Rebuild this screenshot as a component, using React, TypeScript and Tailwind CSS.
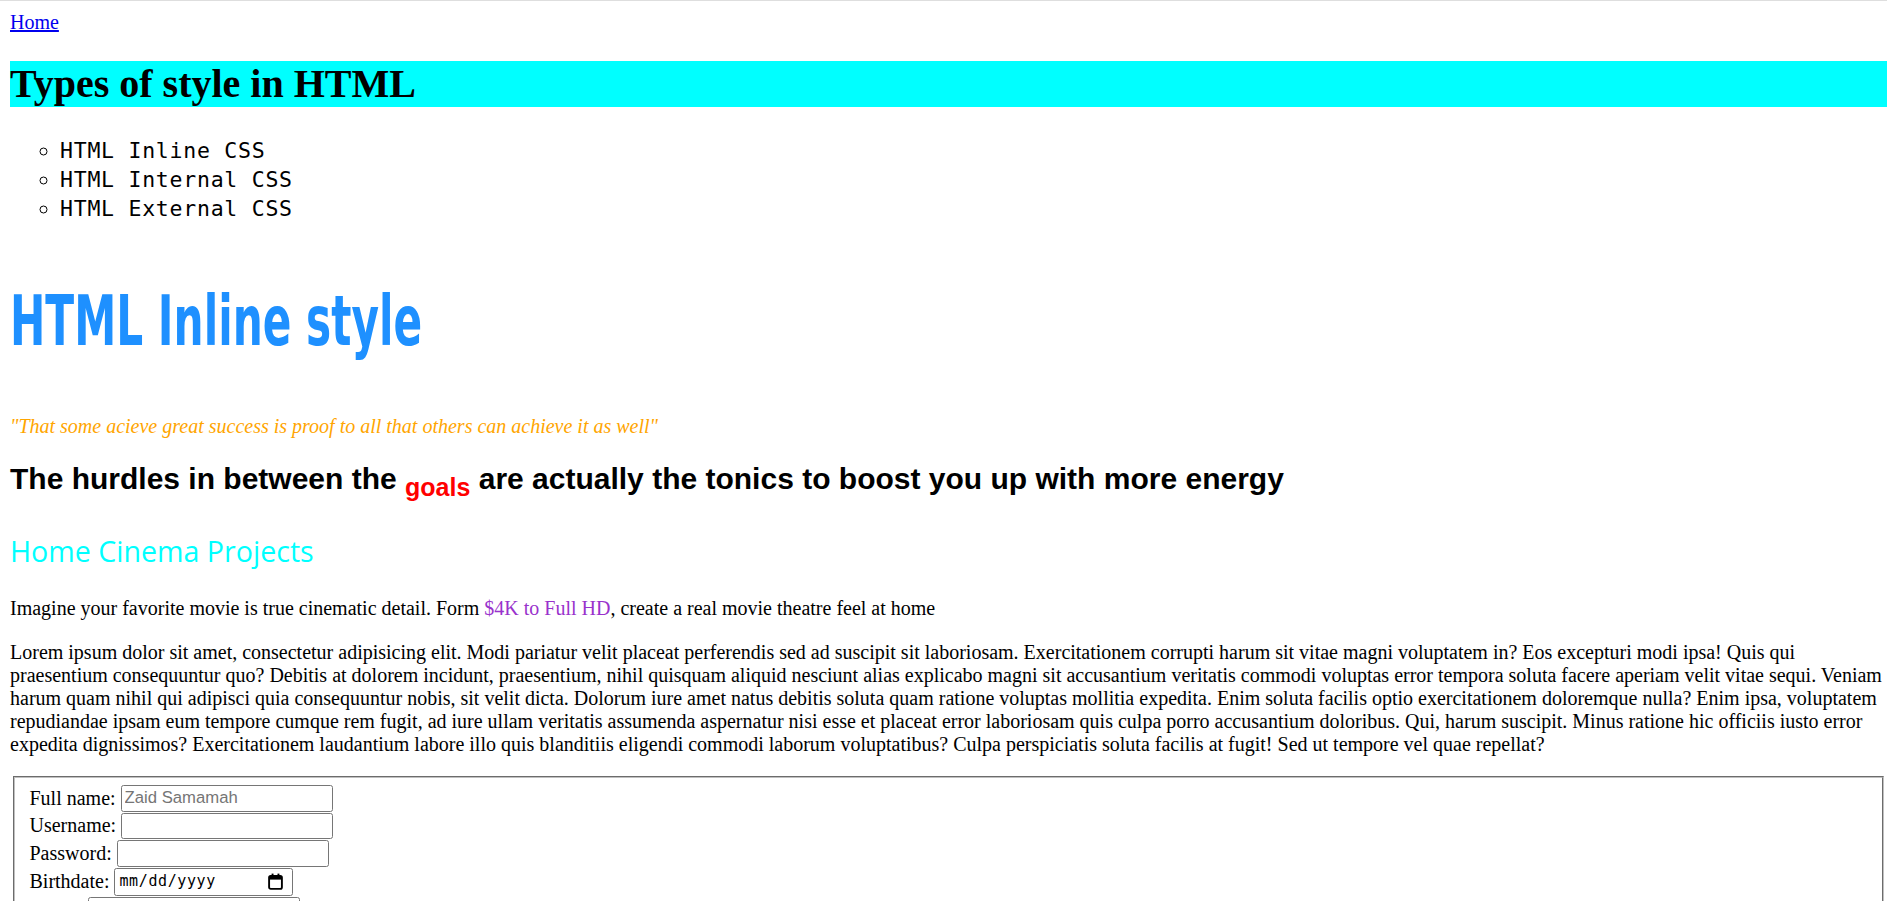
import type { ReactNode } from 'react'

const LOREM =
  'Lorem ipsum dolor sit amet, consectetur adipisicing elit. Modi pariatur velit placeat perferendis sed ad suscipit sit laboriosam. Exercitationem corrupti harum sit vitae magni voluptatem in? Eos excepturi modi ipsa! Quis qui praesentium consequuntur quo? Debitis at dolorem incidunt, praesentium, nihil quisquam aliquid nesciunt alias explicabo magni sit accusantium veritatis commodi voluptas error tempora soluta facere aperiam velit vitae sequi. Veniam harum quam nihil qui adipisci quia consequuntur nobis, sit velit dicta. Dolorum iure amet natus debitis soluta quam ratione voluptas mollitia expedita. Enim soluta facilis optio exercitationem doloremque nulla? Enim ipsa, voluptatem repudiandae ipsam eum tempore cumque rem fugit, ad iure ullam veritatis assumenda aspernatur nisi esse et placeat error laboriosam quis culpa porro accusantium doloribus. Qui, harum suscipit. Minus ratione hic officiis iusto error expedita dignissimos? Exercitationem laudantium labore illo quis blanditiis eligendi commodi laborum voluptatibus? Culpa perspiciatis soluta facilis at fugit! Sed ut tempore vel quae repellat?'

const STYLES = ['HTML Inline CSS', 'HTML Internal CSS', 'HTML External CSS']

function Row({ label, children, tall }: { label: string; children: ReactNode; tall?: boolean }) {
  return (
    <div className={`flex items-center gap-[5px] ${tall ? 'h-[29.5px]' : 'h-[27.5px]'}`}>
      <label>{label}</label>
      {children}
    </div>
  )
}

const inputCls =
  'w-[212px] h-[26.7px] border border-[#767676] rounded-[2.5px] px-[3px] bg-white font-["Liberation_Sans",Arial,sans-serif] text-[16.7px] text-black placeholder:text-[#757575] outline-none'

function CalendarIcon() {
  return (
    <svg width="15" height="17" viewBox="0 0 15 17" fill="none">
      <rect x="1.1" y="3" width="12.8" height="12.9" rx="1.6" stroke="#000" strokeWidth="1.9" />
      <rect x="1.1" y="3" width="12.8" height="3.6" fill="#000" />
      <rect x="3.6" y="0.6" width="1.9" height="3" fill="#000" />
      <rect x="9.5" y="0.6" width="1.9" height="3" fill="#000" />
    </svg>
  )
}

export default function App() {
  return (
    <div className="h-[901px] w-full overflow-hidden bg-white border-t border-[#dedede] font-['Liberation_Serif','Times_New_Roman',serif] text-[20px] text-black">
      <div className="ml-[10px] w-[1876.5px] pt-[10px]">
        <div className="leading-[23px]">
          <a href="#" className="text-[#0000ee] underline">
            Home
          </a>
        </div>

        <h1 className="mt-[26.8px] h-[46px] bg-[#00ffff] text-[40px] leading-[46px] font-bold">
          Types of style in HTML
        </h1>

        <ul className="mt-[30.3px] pl-[50px] list-[circle] font-['DejaVu_Sans_Mono',monospace] text-[21.5px] tracking-[0.75px] leading-[28.8px]">
          {STYLES.map((s) => (
            <li key={s}>{s}</li>
          ))}
        </ul>

        <h1 className="mt-[62.8px] h-[70px] leading-[70px] whitespace-nowrap">
          <span className="inline-block origin-left scale-x-[0.616] font-['DejaVu_Sans',sans-serif] font-bold text-[68.6px] text-[#1e90ff]">
            HTML Inline style
          </span>
        </h1>

        <p className="mt-[58.45px] italic text-[#ffa500] leading-[23px]">
          "That some acieve great success is proof to all that others can achieve it as well"
        </p>

        <h2 className="mt-[24.6px] font-['Liberation_Sans',Arial,sans-serif] font-bold text-[30px] leading-[34.5px]">
          The hurdles in between the{' '}
          <sub className="relative top-[7px] bottom-auto align-baseline text-[25px] leading-none text-[#ff0000]">goals</sub>{' '}
          are actually the tonics to boost you up with more energy
        </h2>

        <h2 className="mt-[36.5px] font-['Open_Sans',sans-serif] text-[28.6px] leading-[35px] text-[#00ffff]">
          Home Cinema Projects
        </h2>

        <p className="mt-[28.35px] leading-[23px]">
          Imagine your favorite movie is true cinematic detail. Form{' '}
          <a href="#" className="text-[#9932cc]">
            $4K to Full HD
          </a>
          , create a real movie theatre feel at home
        </p>

        <p className="mt-[21px] leading-[23px]">{LOREM}</p>

        <form className="mt-[20px]">
          <fieldset className="mx-[2.5px] border-[2.5px] [border-style:groove] border-[#c0c0c0] pt-[7px] px-[15px] pb-[12.5px] leading-[23px]">
            <Row label="Full name:">
              <input type="text" placeholder="Zaid Samamah" className={inputCls} />
            </Row>
            <Row label="Username:">
              <input type="text" className={inputCls} />
            </Row>
            <Row label="Password:">
              <input type="password" className={inputCls} />
            </Row>
            <Row label="Birthdate:" tall>
              <div className="w-[178.6px] h-[28.5px] border border-[#767676] rounded-[2.5px] bg-white flex items-center justify-between pl-[4px] pr-[9px]">
                <span className="font-['DejaVu_Sans_Mono',monospace] text-[15px] tracking-[0.6px] text-black">mm/dd/yyyy</span>
                <CalendarIcon />
              </div>
            </Row>
            <Row label="Email:">
              <input type="email" className={inputCls} />
            </Row>
          </fieldset>
        </form>
      </div>
    </div>
  )
}
